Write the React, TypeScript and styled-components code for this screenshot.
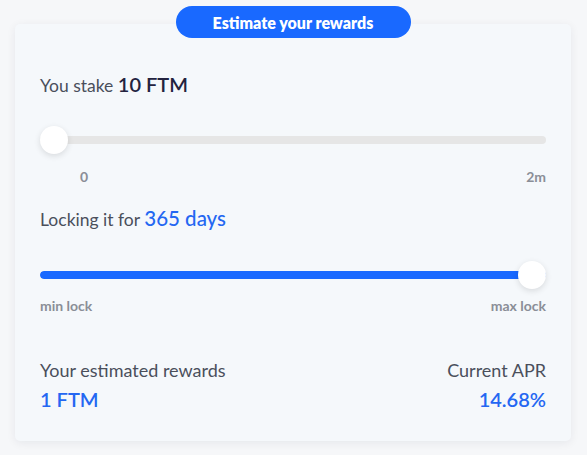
import React from "react";
import styled, { createGlobalStyle } from "styled-components";

const Global = createGlobalStyle`
  html, body { margin: 0; padding: 0; background: #f6f7f9; }
  body { font-family: Lato, "Open Sans", sans-serif; }
`;

const Page = styled.div`
  display: flex;
  flex-direction: column;
  align-items: center;
  padding: 6px 16px 14px 15px;
`;

const Pill = styled.div`
  position: relative;
  z-index: 1;
  width: 235px;
  height: 32px;
  border-radius: 16px;
  background: #1969ff;
  color: #fff;
  font-weight: 800;
  font-size: 16px;
  display: flex;
  align-items: center;
  justify-content: center;
  margin-bottom: -14px;
`;

const Card = styled.div`
  align-self: stretch;
  height: 417px;
  box-sizing: border-box;
  background: #f5f8fb;
  border-radius: 5px;
  box-shadow: 0 2px 10px rgba(20, 30, 60, 0.07);
  padding: 48px 25px 0 25px;
  display: flex;
  flex-direction: column;
`;

const Heading = styled.div<{ $top?: number }>`
  font-size: 17.5px;
  line-height: 24px;
  color: #4a4f5b;
  margin-top: ${(p) => p.$top ?? 0}px;
`;

const Value = styled.span<{ $blue?: boolean }>`
  font-size: ${(p) => (p.$blue ? 20.5 : 20)}px;
  font-weight: ${(p) => (p.$blue ? 500 : 600)};
  color: ${(p) => (p.$blue ? "#2467f2" : "#23233f")};
`;

const Slider = styled.div<{ $top: number }>`
  position: relative;
  height: 30px;
  margin-top: ${(p) => p.$top}px;
  display: flex;
  align-items: center;
`;

const Track = styled.div`
  height: 8px;
  width: 100%;
  border-radius: 4px;
  background: #e6e6e6;
  overflow: hidden;
`;

const Fill = styled.div`
  height: 100%;
  background: #1969ff;
  border-radius: 4px;
`;

const Thumb = styled.div`
  position: absolute;
  top: 1px;
  width: 28px;
  height: 28px;
  border-radius: 50%;
  background: #fff;
  box-shadow: 0 2px 6px rgba(0, 0, 0, 0.12);
`;

const Labels = styled.div<{ $top: number; $inset: number }>`
  display: flex;
  justify-content: space-between;
  margin-top: ${(p) => p.$top}px;
  padding-left: ${(p) => p.$inset}px;
  font-size: 14px;
  line-height: 16px;
  font-weight: 700;
  color: #8a8e97;
`;

const Results = styled.div`
  display: flex;
  justify-content: space-between;
  margin-top: 45px;
`;

const Stat = styled.div<{ $right?: boolean }>`
  display: flex;
  flex-direction: column;
  align-items: ${(p) => (p.$right ? "flex-end" : "flex-start")};
  gap: 6px;
`;

const StatLabel = styled.div`
  font-size: 18px;
  line-height: 22px;
  color: #4a4f5b;
`;

const StatValue = styled.div`
  font-size: 20px;
  line-height: 24px;
  font-weight: 600;
  color: #2467f2;
`;

type RangeProps = { pct: number; top: number };

const Range = ({ pct, top }: RangeProps) => (
  <Slider $top={top}>
    <Track>
      <Fill style={{ width: `${pct}%` }} />
    </Track>
    <Thumb style={{ left: `calc(${pct}% - ${(pct / 100) * 28}px)` }} />
  </Slider>
);

export default function App() {
  return (
    <>
      <Global />
      <Page>
        <Pill>Estimate your rewards</Pill>
        <Card>
          <Heading>
            You stake <Value>10 FTM</Value>
          </Heading>
          <Range pct={0} top={27} />
          <Labels $top={14} $inset={40}>
            <span>0</span>
            <span>2m</span>
          </Labels>
          <Heading $top={21}>
            Locking it for <Value $blue>365 days</Value>
          </Heading>
          <Range pct={100} top={28} />
          <Labels $top={8} $inset={0}>
            <span>min lock</span>
            <span>max lock</span>
          </Labels>
          <Results>
            <Stat>
              <StatLabel>Your estimated rewards</StatLabel>
              <StatValue>1 FTM</StatValue>
            </Stat>
            <Stat $right>
              <StatLabel>Current APR</StatLabel>
              <StatValue>14.68%</StatValue>
            </Stat>
          </Results>
        </Card>
      </Page>
    </>
  );
}
